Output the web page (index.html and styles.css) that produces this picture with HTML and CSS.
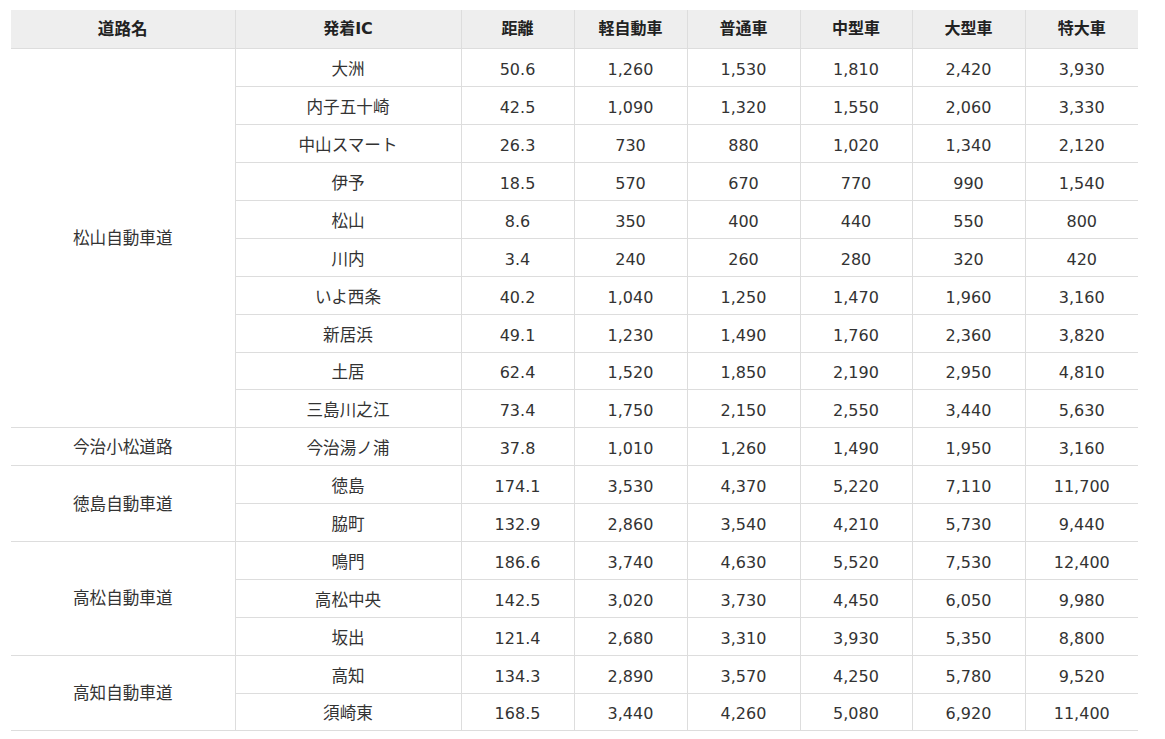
FILE: index.html
```html
<!DOCTYPE html>
<html lang="ja">
<head>
<meta charset="utf-8">
<title>料金表</title>
<link rel="stylesheet" href="styles.css">
</head>
<body>
<div class="wrap">
<table class="fare">
<colgroup>
<col class="c-road"><col class="c-ic"><col class="c-num"><col class="c-num"><col class="c-num"><col class="c-num5"><col class="c-num"><col class="c-num">
</colgroup>
<thead>
<tr><th class="road">道路名</th><th>発着IC</th><th>距離</th><th>軽自動車</th><th>普通車</th><th>中型車</th><th>大型車</th><th class="last">特大車</th></tr>
</thead>
<tbody>
<tr><td class="road" rowspan="10">松山自動車道</td><td class="ic">大洲</td><td>50.6</td><td>1,260</td><td>1,530</td><td>1,810</td><td>2,420</td><td class="last">3,930</td></tr>
<tr><td class="ic">内子五十崎</td><td>42.5</td><td>1,090</td><td>1,320</td><td>1,550</td><td>2,060</td><td class="last">3,330</td></tr>
<tr><td class="ic">中山スマート</td><td>26.3</td><td>730</td><td>880</td><td>1,020</td><td>1,340</td><td class="last">2,120</td></tr>
<tr><td class="ic">伊予</td><td>18.5</td><td>570</td><td>670</td><td>770</td><td>990</td><td class="last">1,540</td></tr>
<tr><td class="ic">松山</td><td>8.6</td><td>350</td><td>400</td><td>440</td><td>550</td><td class="last">800</td></tr>
<tr><td class="ic">川内</td><td>3.4</td><td>240</td><td>260</td><td>280</td><td>320</td><td class="last">420</td></tr>
<tr><td class="ic">いよ西条</td><td>40.2</td><td>1,040</td><td>1,250</td><td>1,470</td><td>1,960</td><td class="last">3,160</td></tr>
<tr><td class="ic">新居浜</td><td>49.1</td><td>1,230</td><td>1,490</td><td>1,760</td><td>2,360</td><td class="last">3,820</td></tr>
<tr><td class="ic">土居</td><td>62.4</td><td>1,520</td><td>1,850</td><td>2,190</td><td>2,950</td><td class="last">4,810</td></tr>
<tr><td class="ic">三島川之江</td><td>73.4</td><td>1,750</td><td>2,150</td><td>2,550</td><td>3,440</td><td class="last">5,630</td></tr>
<tr><td class="road">今治小松道路</td><td class="ic">今治湯ノ浦</td><td>37.8</td><td>1,010</td><td>1,260</td><td>1,490</td><td>1,950</td><td class="last">3,160</td></tr>
<tr><td class="road" rowspan="2">徳島自動車道</td><td class="ic">徳島</td><td>174.1</td><td>3,530</td><td>4,370</td><td>5,220</td><td>7,110</td><td class="last">11,700</td></tr>
<tr><td class="ic">脇町</td><td>132.9</td><td>2,860</td><td>3,540</td><td>4,210</td><td>5,730</td><td class="last">9,440</td></tr>
<tr><td class="road" rowspan="3">高松自動車道</td><td class="ic">鳴門</td><td>186.6</td><td>3,740</td><td>4,630</td><td>5,520</td><td>7,530</td><td class="last">12,400</td></tr>
<tr><td class="ic">高松中央</td><td>142.5</td><td>3,020</td><td>3,730</td><td>4,450</td><td>6,050</td><td class="last">9,980</td></tr>
<tr><td class="ic">坂出</td><td>121.4</td><td>2,680</td><td>3,310</td><td>3,930</td><td>5,350</td><td class="last">8,800</td></tr>
<tr><td class="road" rowspan="2">高知自動車道</td><td class="ic">高知</td><td>134.3</td><td>2,890</td><td>3,570</td><td>4,250</td><td>5,780</td><td class="last">9,520</td></tr>
<tr><td class="ic">須崎東</td><td>168.5</td><td>3,440</td><td>4,260</td><td>5,080</td><td>6,920</td><td class="last">11,400</td></tr>
</tbody>
</table>
</div>
</body>
</html>
```

FILE: styles.css
```css
html, body {
  margin: 0;
  padding: 0;
  background: #ffffff;
}

.wrap {
  padding: 10px 11px;
}

.fare {
  width: 1127px;
  table-layout: fixed;
  border-collapse: collapse;
  font-family: "DejaVu Sans", "Noto Sans CJK JP", sans-serif;
  font-size: 16px;
  color: #333333;
}

.c-road { width: 224px; }
.c-ic { width: 226px; }
.c-num { width: 113px; }
.c-num5 { width: 112px; }

.fare th,
.fare td {
  padding: 5px 0 0 0;
  height: 31.9px;
  line-height: 20px;
  text-align: center;
  vertical-align: middle;
  border: 1px solid #dddddd;
  border-top: none;
}

.fare th {
  background: #eeeeee;
  font-weight: bold;
  color: #222222;
  padding: 0;
  height: 36.4px;
}

.fare .road {
  border-left: none;
  padding-top: 2px;
  font-size: 16.6px;
}

.fare .ic {
  font-size: 16.6px;
}

.fare .last {
  border-right: none;
}
```
